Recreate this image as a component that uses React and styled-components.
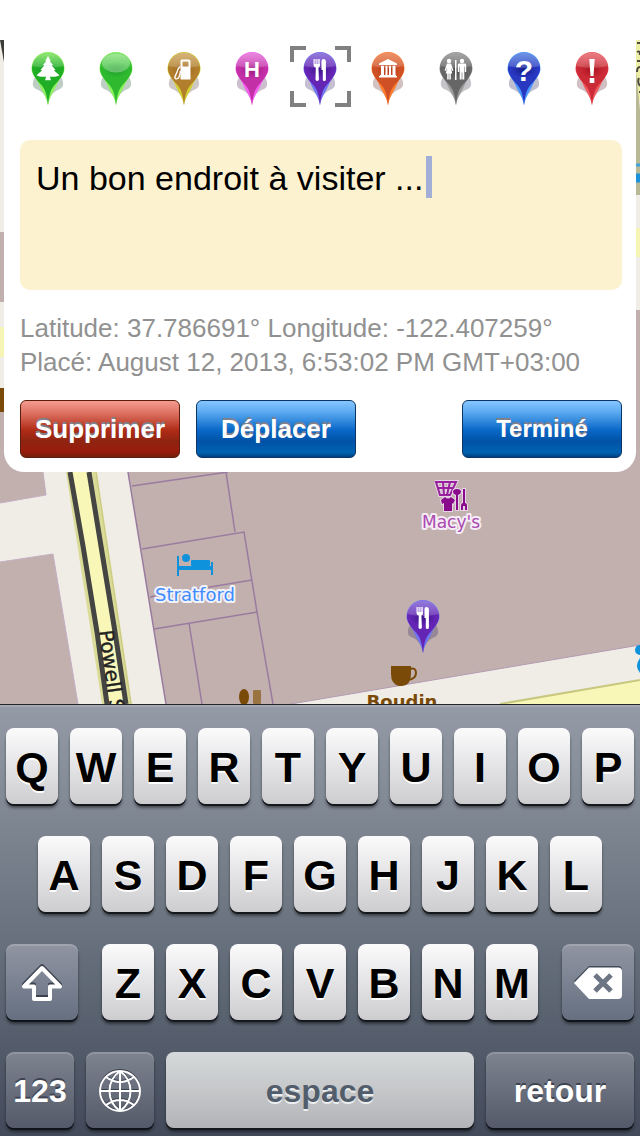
import React, { useId, useState } from "react";
import styled, { createGlobalStyle, css } from "styled-components";

const GlobalStyle = createGlobalStyle`
  * {
    box-sizing: border-box;
  }

  body {
    margin: 0;
    background: #fff;
    font-family: "Liberation Sans", Arial, sans-serif;
  }

  button {
    font-family: inherit;
    border: none;
    padding: 0;
    cursor: pointer;
  }
`;

const Page = styled.div`
  display: flex;
  flex-direction: column;
  min-height: 100vh;
`;

const StatusBar = styled.div`
  height: 40px;
  background: #fff;
`;

const MapArea = styled.main`
  position: relative;
  flex: 1;
  padding: 0 4px 232px;
  background: #c2b0ae;
  overflow: hidden;
`;

const MapCanvas = styled.svg`
  position: absolute;
  inset: 0;
  width: 100%;
  height: 100%;
  font-family: "DejaVu Sans", sans-serif;
`;

const Panel = styled.section`
  position: relative;
  background: #fff;
  border-radius: 0 0 20px 20px;
  padding: 6px 0 14px;
`;

const PinRow = styled.div`
  display: grid;
  grid-template-columns: repeat(9, 1fr);
  justify-items: center;
  padding: 0 10px;
`;

const PinButton = styled.button`
  position: relative;
  display: flex;
  align-items: flex-end;
  justify-content: center;
  width: 61px;
  height: 61px;
  padding-bottom: 1px;
  background: none;
`;

const SelectionFrame = styled.svg`
  position: absolute;
  inset: 0;
`;

const PanelBody = styled.div`
  display: flex;
  flex-direction: column;
  gap: 21px;
  margin-top: 33px;
  padding: 0 14px 0 16px;
`;

const NoteWrapper = styled.div`
  position: relative;
  display: flex;
`;

const NoteInput = styled.textarea`
  width: 100%;
  height: 150px;
  padding: 17px 16px;
  border: none;
  border-radius: 10px;
  outline: none;
  resize: none;
  background: #fcf2cf;
  color: #000;
  font-family: inherit;
  font-size: 34px;
  line-height: 42px;
`;

const Caret = styled.span`
  position: absolute;
  top: 16px;
  left: 406px;
  width: 6px;
  height: 42px;
  background: #a1afd8;
`;

const Meta = styled.p`
  margin: 0;
  color: #919191;
  font-size: 26px;
  line-height: 34px;
`;

const Actions = styled.div`
  display: flex;
  gap: 16px;
`;

const blue = css`
  border-color: #0a3566;
  background: linear-gradient(
    #86c6ff,
    #5aa9f0 20%,
    #0a68c8 52%,
    #0052a6 72%,
    #0063b2 92%,
    #00407f
  );
`;

const red = css`
  border-color: #5c1d0c;
  background: linear-gradient(
    #f49c90,
    #df7466 20%,
    #b02c16 52%,
    #8f2411 72%,
    #991c0c 90%,
    #74200e
  );
`;

const ActionButton = styled.button`
  width: 160px;
  height: 58px;
  border: 1px solid;
  border-radius: 6px;
  color: #fff;
  font-size: ${(p) => (p.$small ? "24px" : "26px")};
  font-weight: bold;
  text-shadow: 0 -2px 0 #80808c;
  ${(p) => (p.$danger ? red : blue)}
  ${(p) => p.$end && "margin-left: auto;"}
`;

const KeyboardWrapper = styled.footer`
  display: flex;
  flex-direction: column;
  gap: 32px;
  padding: 23px 6px 8px;
  border-top: 1px solid #24262a;
  background: linear-gradient(#949ba7, #6b7480 50%, #434b5b);
  box-shadow: inset 0 2px 0 #a3a9b4;
`;

const KeyRow = styled.div`
  display: flex;
  gap: 12px;
  padding: 0 ${(p) => p.$inset || 0}px;
`;

const ShiftRow = styled.div`
  display: grid;
  grid-template-columns: 72px 1fr 72px;
  gap: 24px;
`;

const BottomRow = styled.div`
  display: grid;
  grid-template-columns: 68px 68px 1fr 148px;
  gap: 12px;
`;

const Key = styled.button`
  display: flex;
  align-items: center;
  justify-content: center;
  flex: 1;
  min-width: 0;
  height: 76px;
  padding-top: 2px;
  border-radius: 8px;
  background: linear-gradient(#fbfbfc, #cdcdd0);
  box-shadow: 0 2px 0 #15181c, 0 4px 3px rgba(0, 0, 0, 0.45);
  color: #000;
  font-size: 43px;
  font-weight: bold;
  text-shadow: 0 2px 0 #fff;
`;

const DarkKey = styled(Key)`
  background: ${(p) =>
    p.$deep
      ? "linear-gradient(#7d838f, #545a69)"
      : "linear-gradient(#9095a2, #667081)"};
  box-shadow: inset 0 2px 0 rgba(255, 255, 255, 0.15), 0 2px 0 #10141a,
    0 4px 3px rgba(0, 0, 0, 0.45);
  color: #fff;
  font-size: 32px;
  text-shadow: 0 -2px 0 #3d4350;
`;

const SpaceKey = styled(Key)`
  background: linear-gradient(#d6d9da, #b3b4b8);
  color: #525d6b;
  font-size: 32px;
  text-shadow: 0 2px 0 #eceeef;
`;

const pins = [
  { id: "park", name: "Parc", light: "#7be35a", main: "#1fae26", dark: "#159a22", edge: "#8cf25e" },
  { id: "plain", name: "Repère", light: "#7be36c", main: "#2fb92f", dark: "#1fa02c", edge: "#8cf25e" },
  { id: "fuel", name: "Essence", light: "#cda65c", main: "#b27e2c", dark: "#9a6420", edge: "#cfd02a" },
  { id: "hospital", name: "Hôpital", light: "#e66fdc", main: "#c22fa6", dark: "#9c1c80", edge: "#f45cf0" },
  { id: "food", name: "Restaurant", light: "#7a5ed6", main: "#6424b4", dark: "#40158c", edge: "#6e74f4" },
  { id: "museum", name: "Musée", light: "#ea7c48", main: "#cf5024", dark: "#b03c1c", edge: "#ff7c2c" },
  { id: "toilets", name: "Toilettes", light: "#929292", main: "#666666", dark: "#4c4c4c", edge: "#9a9a9a" },
  { id: "question", name: "Question", light: "#4d7fe2", main: "#2838c0", dark: "#141c88", edge: "#4a98ff" },
  { id: "alert", name: "Alerte", light: "#e8606a", main: "#cc2a36", dark: "#a8141f", edge: "#f0565c" },
];

const Person = ({ x, skirt }) => (
  <g transform={`translate(${x} 0)`}>
    <circle cx="0" cy="9" r="2.200" />
    {skirt ? (
      <path d="M-2 11.500h4l2.500 7-1.200.5-1.500-3.500 1.500 6h-1.500v6h-1.500v-6h-.6v6h-1.500v-6h-1.500l1.500-6-1.500 3.500-1.200-.5Z" />
    ) : (
      <path d="M-3 11.500h6q1.200 0 1.200 1.500v7h-1.400v-5.500h-.5v13h-2v-7h-.6v7h-2v-13h-.5v5.500h-1.400v-7q0-1.500 1.200-1.500Z" />
    )}
  </g>
);

const PinGlyph = ({ id }) => {
  switch (id) {
    case "park":
      return <path d="M17 4 19.800 9h-1.200l3.500 4-1.500.5 4 4.500-1.800.3 5.700 5c-3 1.500-6 1.700-9.500 1.300l.8 3.700h-5.600l.8-3.700c-3.500.4-6.500.2-9.500-1.300l5.700-5-1.800-.3 4-4.500-1.500-.5 3.500-4h-1.200Z" />;
    case "fuel":
      return (
        <>
          <path
            fillRule="evenodd"
            d="M14.500 7.500h7q2 0 2 2v18h-10v-18q0-2 1-2ZM15.500 9.500v5h6v-5Z"
          />
          <path
            d="M13.500 15c-2 0-2.500 2-3.500 5s-2.500 4.500-2 6 3 1 4-1 1-4 1.500-6"
            fill="none"
            stroke="#fff"
            strokeWidth="1.400"
          />
        </>
      );
    case "hospital":
      return <text x="17" y="25" textAnchor="middle" fontSize="22">H</text>;
    case "food":
      return (
        <>
          <path d="M10.500 7h1.200v5h.8v-5h1.200v5h.8v-5h1.200v5h.6v-5h.7v6q0 2-1.600 2.600l.5 12q0 1.400-1.700 1.400t-1.700-1.400l.3-12q-2.300-.6-2.300-2.600Z" />
          <path d="M18.500 9q0-2 2-2t2.400 2v18.500q0 1.500-1.600 1.500t-1.500-1.500v-9.500h-1.300Z" />
        </>
      );
    case "museum":
      return (
        <path d="M17 7l9 4.500v1.500h-18v-1.500ZM10 13.700h3v9.300h-3ZM14.500 13.700h2v9.300h-2ZM18 13.700h2v9.300h-2ZM21.500 13.700h3v9.300h-3ZM9 23h16v1h1v1.500h-18v-1.500h1Z" />
      );
    case "toilets":
      return (
        <>
          <Person x={10} skirt />
          <rect x="16" y="8" width="1.500" height="20" />
          <Person x={23} />
        </>
      );
    case "question":
      return <text x="17" y="29" textAnchor="middle" fontSize="30">?</text>;
    case "alert":
      return <path d="M14.300 7h5.400l-1.200 17h-3ZM14.700 26h4.600v5h-4.600Z" />;
    default:
      return null;
  }
};

const Pin = ({ pin, x, y }) => {
  const uid = useId();
  const body = `body${uid}`;
  const core = `core${uid}`;

  return (
    <svg x={x} y={y} width="34" height="54" viewBox="0 0 34 54" aria-hidden="true">
      <defs>
        <linearGradient id={body} x1="0" y1="0" x2="0" y2="1">
          <stop offset="0" stopColor={pin.light} />
          <stop offset="0.280" stopColor={pin.main} />
          <stop offset="1" stopColor={pin.main} />
        </linearGradient>
        <radialGradient id={core}>
          <stop offset="0" stopColor={pin.dark} />
          <stop offset="1" stopColor={pin.dark} stopOpacity="0" />
        </radialGradient>
      </defs>
      <path
        d="M4 25C1 30 1 35 5 37c5 2 10 5 12 15 2-10 7-13 12-15 4-2 4-7 1-12Z"
        fill={pin.dark}
        opacity="0.140"
      />
      <path
        d="M4 25C1 30 1 35 5 37c5 2 10 5 12 15 2-10 7-13 12-15 4-2 4-7 1-12Z"
        fill="#30304a"
        opacity="0.180"
      />
      <path
        d="M17 53.500C16 45 11 40 7 30C3 24 .5 21 .5 16.500a16.500 16.500 0 0 1 33 0C33.500 21 31 24 27 30C23 40 18 45 17 53.500Z"
        fill={pin.edge}
      />
      <path
        d="M17 53.500C16 43 14.500 37 9 31.500C4 26 1 21 1 16.500a16 16 0 0 1 32 0C33 21 30 26 25 31.500C19.500 37 18 43 17 53.500Z"
        fill={`url(#${body})`}
      />
      <ellipse cx="17" cy="18" rx="13" ry="8" fill={`url(#${core})`} />
      {pin.id === "plain" ? (
        <ellipse cx="17" cy="11" rx="14" ry="9.500" fill="#fff" opacity="0.300" />
      ) : (
        <path d="M1.500 14a15.500 13.500 0 0 1 31 0q-15.500 4-31 0Z" fill="#fff" opacity="0.180" />
      )}
      <g
        fill="#fff"
        fontFamily="Liberation Sans, sans-serif"
        fontWeight="bold"
      >
        <PinGlyph id={pin.id} />
      </g>
    </svg>
  );
};

const CityMap = () => (
  <MapCanvas viewBox="0 40 640 664" preserveAspectRatio="xMidYMin slice">
    <rect y="40" width="640" height="664" fill="#c2b0ae" />

    {/* west edge */}
    <rect y="40" width="30" height="192" fill="#f0ede6" />
    <path d="M0 40h4v22Z" fill="#3c3c38" />
    <rect y="302" width="30" height="86" fill="#f0ede6" />
    <rect y="327" width="30" height="30" fill="#f6f5b6" />
    <rect y="388" width="4" height="24" fill="#7a4b08" />

    {/* east edge */}
    <rect x="600" y="40" width="40" height="270" fill="#f0ede6" />
    <rect x="600" y="40" width="40" height="60" fill="#eeeda6" />
    <path d="M636 70 640 110V195H636Z" fill="#b9b995" />
    <path d="M637 43h3M637 52q3-2 3 3M637 61h3M637 72q0-5 3-5M639 78q-2 4 1 8M639 92h1" fill="none" stroke="#4a4a42" strokeWidth="2" />
    <path d="M630 165h10" stroke="#3fa3dc" strokeWidth="3" />
    <path d="M630 178h10" stroke="#1b92dc" strokeWidth="9" />
    <rect x="600" y="228" width="40" height="29" fill="#f6f5b6" />

    {/* Powell street */}
    <path d="M43 472 46 495 0 503V562L53 554 78 704H166L128 472Z" fill="#f0ede6" />
    <path d="M43 472 46 495 0 503M0 562 53 554 78 704" fill="none" stroke="#c4aec4" strokeWidth="1" />
    <path d="M66 472H97L132 704H102Z" fill="#dbdb98" />
    <path d="M71 472H92L126 704H108Z" fill="#f8f7b8" />
    <path d="M70 472 83 546 97 632 107 704M89 472 100 540 115 632 126 704" fill="none" stroke="#444442" strokeWidth="5" />
    <path d="M96 472 131 704" stroke="#c8c880" strokeWidth="1" />
    <text transform="translate(99 631) rotate(82)" fontSize="20" fill="#222" stroke="#222" strokeWidth="0.400">
      Powell St
    </text>

    {/* building lots */}
    <g fill="none" stroke="#9a7ba0" strokeWidth="1.500">
      <path d="M128 472 166 704" />
      <path d="M132 486 228 472M226 472 235 532M142 549 244 532L257 612 273 704" />
      <path d="M150 597 252 580M154 629 257 612M189 623 202 704" />
    </g>

    {/* south street */}
    <path d="M273 707 640 645V704H273Z" fill="#f0ede6" />
    <path d="M273 707 640 645" stroke="#b39ab4" strokeWidth="1" />
    <path d="M500 704 640 680V704Z" fill="#f8f7b8" />
    <path d="M500 704 640 680" stroke="#c8c880" strokeWidth="2" />

    <g fill="#0f92dc">
      <path d="M177 556h2v10h32v-4h2v13h-2v-5h-32v6h-2Z" />
      <circle cx="186" cy="558" r="4" />
      <rect x="191" y="560" width="19" height="6" rx="1" />
      <circle cx="640" cy="650" r="5" />
      <path d="M640 658q-6 8 0 15Z" />
    </g>
    <text x="195" y="601" textAnchor="middle" fontSize="18" fill="#3f8cff" stroke="#f2f2fa" strokeWidth="4" paintOrder="stroke" strokeLinejoin="round">
      Stratford
    </text>

    {/* shop: basket, shirt and cutlery */}
    <path d="M435 482H456L450 495H440L436 482M438 488H453M443 482 444 495M450 482 447 495" fill="none" stroke="#e6d4e6" strokeWidth="4" />
    <path d="M435 482H456L450 495H440L436 482M438 488H453M443 482 444 495M450 482 447 495" fill="none" stroke="#98209c" strokeWidth="2" />
    <g stroke="#e6d4e6" strokeWidth="2" paintOrder="stroke" fill="#8a0a8c">
      <path d="M441 500 445 497Q448 500 451 497L455 500 453 504 452 503V511H444V503L442 504Z" />
      <path d="M457 489q4 0 4 3 0 2-3 3v15h-2v-15q-3-1-3-3 0-3 4-3Z" />
      <path d="M463 489h2v14q2 0 2 3v4h-2v-4h-2v4h-2v-4q0-3 2-3Z" />
    </g>
    <text x="451" y="528" textAnchor="middle" fontSize="17" fill="#a94ab0" stroke="#f6ecf6" strokeWidth="4" paintOrder="stroke" strokeLinejoin="round">
      Macy's
    </text>

    <path d="M391 666h20v8q0 11-9 12h-3q-8-2-8-12Z" fill="#7a4b08" />
    <path d="M410 669q6-2 6 4t-8 7" fill="none" stroke="#7a4b08" strokeWidth="2" />
    <text x="402" y="708" textAnchor="middle" fontSize="18" fontWeight="bold" fill="#7a4b08" stroke="#f3eee4" strokeWidth="2" paintOrder="stroke">
      Boudin
    </text>
    <ellipse cx="244" cy="697" rx="5" ry="8" fill="#7a4b08" />
    <rect x="253" y="690" width="8" height="14" rx="1" fill="#9a7440" />

    <Pin pin={pins[4]} x={406} y={600} />
  </MapCanvas>
);

const ShiftIcon = () => (
  <svg width="44" height="42" viewBox="0 0 44 42" fill="none" strokeLinejoin="round" strokeWidth="4" aria-hidden="true">
    <path d="M22 4 40 22.500H30V35H14V22.500H4Z" stroke="#3d4350" />
    <path d="M22 6 40 24.500H30V37H14V24.500H4Z" stroke="#fff" />
  </svg>
);

const DeleteIcon = () => (
  <svg width="48" height="34" viewBox="0 0 48 34" aria-hidden="true">
    <path d="M0 15 15 0H44q4 0 4 4V26q0 4-4 4H15Z" fill="#434957" />
    <path d="M0 17 15 1.500H44q4 0 4 4V29q0 4-4 4H15Z" fill="#fff" />
    <path d="M21 9 37 25M37 9 21 25" stroke="#6d7585" strokeWidth="5" />
  </svg>
);

const globeLines =
  "M21 2a20 20 0 1 0 0 40a20 20 0 1 0 0-40ZM21 2V42M1 22H41M21 2C7 12 7 32 21 42M21 2C35 12 35 32 21 42M7 8Q21 18 35 8M7 36Q21 26 35 36";

const GlobeIcon = () => (
  <svg width="42" height="44" viewBox="0 0 42 44" fill="none" strokeWidth="2" aria-hidden="true">
    <path d={globeLines} stroke="#393f4b" transform="translate(0 -1)" />
    <path d={globeLines} stroke="#fff" />
  </svg>
);

const letters = (row) => row.split("").map((l) => <Key key={l}>{l}</Key>);

const Keyboard = () => (
  <KeyboardWrapper>
    <KeyRow>{letters("QWERTYUIOP")}</KeyRow>
    <KeyRow $inset={32}>{letters("ASDFGHJKL")}</KeyRow>
    <ShiftRow>
      <DarkKey aria-label="Majuscule">
        <ShiftIcon />
      </DarkKey>
      <KeyRow>{letters("ZXCVBNM")}</KeyRow>
      <DarkKey aria-label="Effacer">
        <DeleteIcon />
      </DarkKey>
    </ShiftRow>
    <BottomRow>
      <DarkKey $deep>123</DarkKey>
      <DarkKey $deep aria-label="Langue">
        <GlobeIcon />
      </DarkKey>
      <SpaceKey>espace</SpaceKey>
      <DarkKey $deep>retour</DarkKey>
    </BottomRow>
  </KeyboardWrapper>
);

const App = () => {
  const [selected, setSelected] = useState("food");
  const [note, setNote] = useState("Un bon endroit à visiter ...");

  return (
    <Page>
      <GlobalStyle />
      <StatusBar />
      <MapArea>
        <CityMap />
        <Panel>
          <PinRow>
            {pins.map((pin) => (
              <PinButton
                key={pin.id}
                aria-label={pin.name}
                aria-pressed={selected === pin.id}
                onClick={() => setSelected(pin.id)}
              >
                <Pin pin={pin} />
                {selected === pin.id && (
                  <SelectionFrame width="61" height="61" viewBox="0 0 61 61">
                    <path
                      d="M2 16V2H16M45 2H59V16M59 45V59H45M16 59H2V45"
                      fill="none"
                      stroke="#808080"
                      strokeWidth="4"
                    />
                  </SelectionFrame>
                )}
              </PinButton>
            ))}
          </PinRow>
          <PanelBody>
            <NoteWrapper>
              <NoteInput
                aria-label="Note"
                value={note}
                onChange={(e) => setNote(e.target.value)}
              />
              <Caret />
            </NoteWrapper>
            <Meta>
              Latitude: 37.786691° Longitude: -122.407259°
              <br />
              Placé: August 12, 2013, 6:53:02 PM GMT+03:00
            </Meta>
            <Actions>
              <ActionButton $danger>Supprimer</ActionButton>
              <ActionButton>Déplacer</ActionButton>
              <ActionButton $small $end>
                Terminé
              </ActionButton>
            </Actions>
          </PanelBody>
        </Panel>
      </MapArea>
      <Keyboard />
    </Page>
  );
};

export default App;
